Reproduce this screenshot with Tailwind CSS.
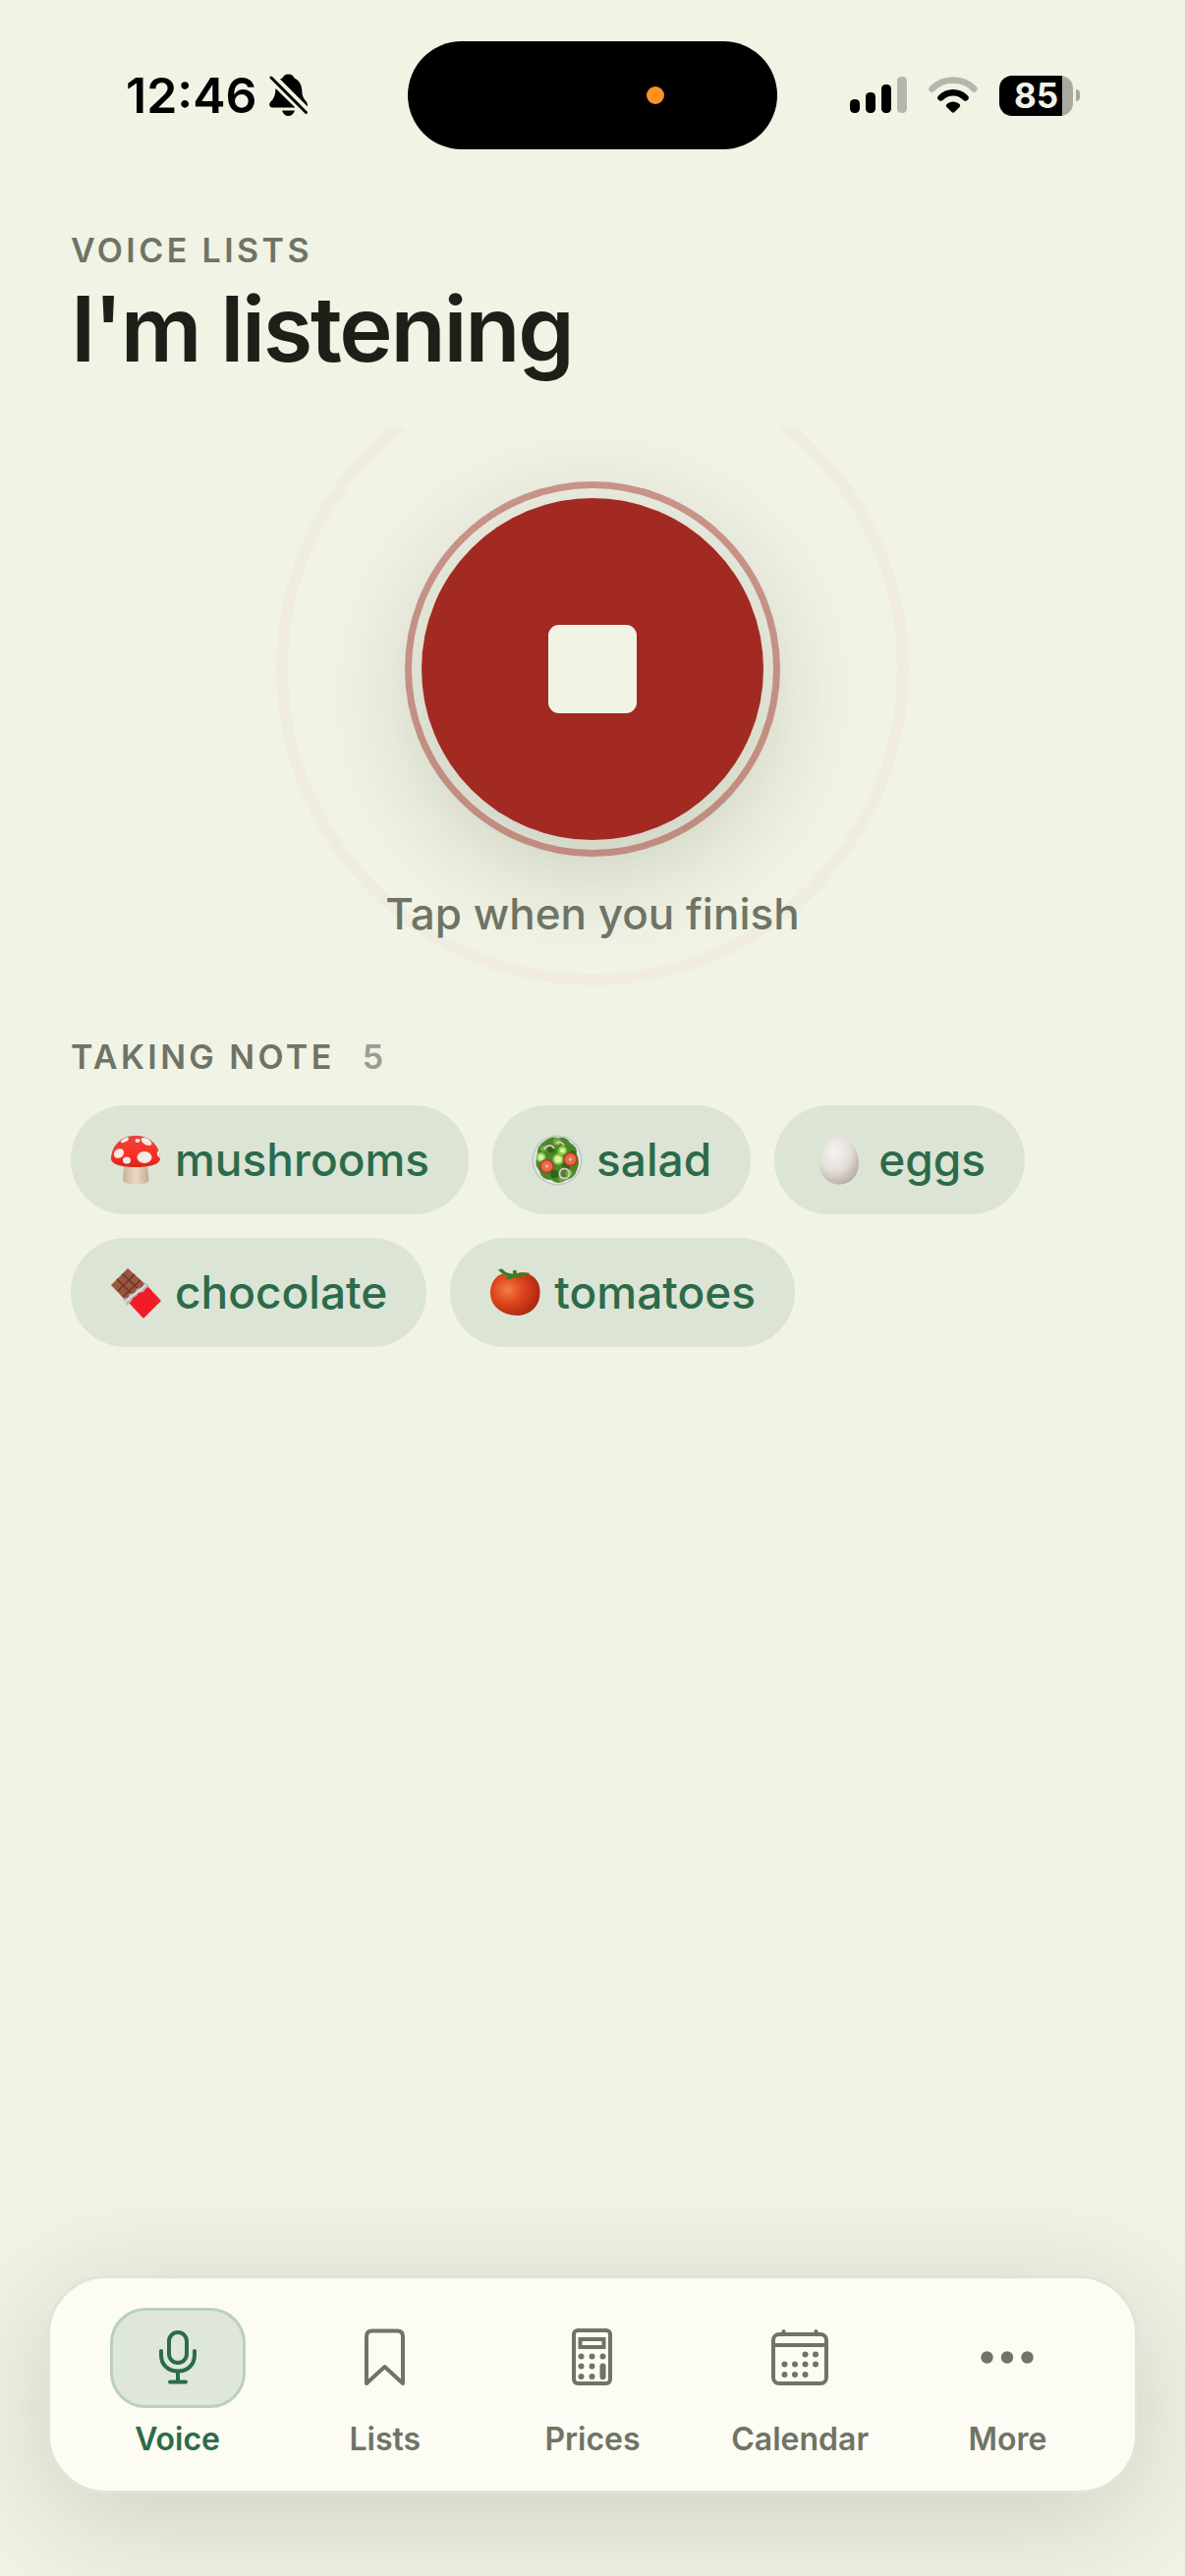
<!DOCTYPE html>
<html lang="en">

<head>
  <meta charset="UTF-8">
  <meta name="viewport" content="width=device-width, initial-scale=1.0">
  <title>Voice Lists</title>
  <script src="https://cdn.jsdelivr.net/npm/@tailwindcss/browser@4"></script>
</head>

<body class="bg-[#f1f3e5] font-['Inter',sans-serif] text-[#6e7466]">

  <div class="min-h-screen flex flex-col">

    <!-- Status Bar -->
    <div class="grid grid-cols-[1fr_376px_1fr] items-center pt-[42px] text-black">
      <div class="flex items-center gap-3 pl-32">
        <span class="text-[50px] leading-[60px] font-semibold">12:46</span>
        <svg class="w-10 h-11" viewBox="0 0 40 44" fill="currentColor">
          <path d="M11 5.5C12.500 5 13.500 4.500 14 3.500C15 1.500 17 0.500 19.500 0.500C22.500 0.500 24.500 2 25.500 4.500C31 7 33 12 33.300 17C33.500 22 34.500 24.500 37 27.500C38.700 29.500 39.200 31 38.800 33.300Z" />
          <path d="M6.500 15L26.500 34.500H3.500C-0.500 34.500 -0.500 30.500 1.500 28.500C5 25 6.200 22 6.500 15Z" />
          <path d="M13 37.500H26C25 41 22.500 43 19.500 43C16.500 43 14 41 13 37.500Z" />
          <path d="M2 4L37.500 39.500" fill="none" stroke="currentColor" stroke-width="3" stroke-linecap="round" />
        </svg>
      </div>
      <div class="h-[110px] rounded-full bg-black flex items-center justify-end pr-[115px]">
        <span class="w-[18px] h-[18px] rounded-full bg-[#ff9124]"></span>
      </div>
      <div class="flex items-center gap-[22px] pl-[74px]">
        <svg class="w-[58px] h-[38px]" viewBox="0 0 58 38" fill="currentColor">
          <rect x="0" y="23" width="10" height="14" rx="4.500" />
          <rect x="16" y="16" width="10" height="21" rx="4.500" />
          <rect x="32" y="8" width="10" height="29" rx="4.500" />
          <rect x="48" y="0" width="10" height="37" rx="4.500" class="text-[#b5b7ac]" fill="currentColor" />
        </svg>
        <svg class="w-[50px] h-[38px]" viewBox="0 0 50 38" fill="none" stroke-width="6.500" stroke-linecap="round">
          <path d="M3.500 12.500C15 0.500 35 0.500 46.500 12.500" stroke="#b5b7ac" />
          <path d="M12.500 21.500C19.500 14.500 30.500 14.500 37.500 21.500" stroke="#000" />
          <path d="M18.500 28C22 24.500 28 24.500 31.500 28C32.500 29 32.300 30 31.500 31L26.500 36C25.500 37 24.500 37 23.500 36L18.500 31C17.700 30 17.500 29 18.500 28Z" fill="#000" />
        </svg>
        <div class="flex items-center gap-[3px]">
          <div class="w-[75px] h-[41px] rounded-[13px] bg-linear-to-r from-black from-85% to-[#a8aa9f] to-85% flex items-center justify-center text-[#f1f3e5] text-[35px] leading-10 font-bold">85</div>
          <span class="w-1 h-3 rounded-r-full bg-[#a8aa9f]"></span>
        </div>
      </div>
    </div>

    <!-- Header -->
    <header class="px-[72px] pt-[78px]">
      <p class="text-[34px] leading-[50px] font-semibold tracking-widest uppercase">Voice Lists</p>
      <h1 class="text-[92px] leading-[110px] font-semibold tracking-tight text-[#1c2018]">I'm listening</h1>
    </header>

    <!-- Recorder -->
    <section class="mt-[45px] h-[590px] overflow-hidden flex flex-col items-center">
      <div class="relative mt-[55px] w-[382px] h-[382px] shrink-0 flex items-center justify-center">
        <span class="absolute -inset-[131px] rounded-full border-12 border-[#f0ede0]"></span>
        <button type="button" aria-label="Stop recording" class="w-[348px] h-[348px] rounded-full bg-[#a22a22] shadow-[0_24px_110px_rgba(28,44,24,0.22)] flex items-center justify-center">
          <span class="w-[90px] h-[90px] rounded-[11px] bg-[#f1f3e5]"></span>
        </button>
        <span class="absolute inset-0 rounded-full border-7 border-[#a22a22]/45 pointer-events-none"></span>
      </div>
      <p class="relative mt-7 text-[44px] leading-[60px] font-medium">Tap when you finish</p>
    </section>

    <!-- Captured items -->
    <section class="px-[72px] pt-[26px]">
      <h2 class="flex gap-7 text-[34px] leading-[50px] font-semibold uppercase"><span class="tracking-widest">Taking note</span><span class="text-[#999d8f]">5</span></h2>
      <ul class="mt-6 flex flex-wrap gap-6 text-[46px] leading-[63px] font-medium text-[#2c6b4a]">
        <li class="flex items-center gap-3.5 rounded-full bg-[#dce4d5] px-10 py-6">
          <svg class="w-[52px] h-[52px]" viewBox="0 0 52 52">
            <defs>
              <linearGradient id="stem" x1="0" x2="1"><stop stop-color="#c9b298" /><stop offset=".5" stop-color="#ead9c4" /><stop offset="1" stop-color="#c4ab90" /></linearGradient>
              <linearGradient id="cap" x1="0" x2="0" y1="0" y2="1"><stop stop-color="#e5443a" /><stop offset=".6" stop-color="#fb3026" /><stop offset="1" stop-color="#d3271f" /></linearGradient>
            </defs>
            <path d="M14 31H38L39.500 46C39.500 49 35 50 26.500 50S13 49 13 46Z" fill="url(#stem)" />
            <path d="M1 24C2 9 13 1 26 1S50 9 51 24C51 31 38 33 26 33S1 31 1 24Z" fill="url(#cap)" />
            <g fill="#f3ebe4">
              <ellipse cx="9" cy="19" rx="5.500" ry="4.500" transform="rotate(-35 9 19)" />
              <ellipse cx="35" cy="23" rx="7.500" ry="6" />
              <ellipse cx="17" cy="26" rx="4" ry="3.500" />
              <ellipse cx="37" cy="7" rx="6" ry="3.200" transform="rotate(30 37 7)" />
              <ellipse cx="15" cy="5.500" rx="4.500" ry="1.800" transform="rotate(-28 15 5.500)" />
              <ellipse cx="28" cy="6" rx="2.500" ry="2" />
              <path d="M50 16C47 17 47 22 51 24Z" />
            </g>
          </svg>
          mushrooms
        </li>
        <li class="flex items-center gap-3.5 rounded-full bg-[#dce4d5] px-10 py-6">
          <svg class="w-[52px] h-[52px]" viewBox="0 0 52 52">
            <circle cx="26" cy="26" r="25.500" fill="#bfc4c6" />
            <circle cx="26" cy="26" r="24" fill="#e4e8e8" />
            <path d="M14 6Q20 1 27 3Q36 2 39 8Q47 12 46 20Q50 28 46 36Q44 44 35 46Q27 52 20 46Q10 46 8 37Q2 30 6 22Q4 12 14 6Z" fill="#48882a" />
            <g fill="#2e651c">
              <circle cx="20" cy="15" r="3.500" /><circle cx="35" cy="32" r="4" /><circle cx="23" cy="40" r="4" /><circle cx="13" cy="27" r="3" /><circle cx="42" cy="19" r="3" />
            </g>
            <g fill="#6eb037">
              <circle cx="26" cy="7" r="4" /><circle cx="12" cy="14" r="3" /><circle cx="38" cy="39" r="3.500" /><circle cx="29" cy="19" r="3" /><circle cx="30" cy="45" r="2.500" />
            </g>
            <g fill="#d9f2a0" stroke="#8acb48" stroke-width="2">
              <circle cx="9.500" cy="23" r="4" /><circle cx="27" cy="25" r="4.500" /><circle cx="31.500" cy="16" r="3.500" />
            </g>
            <g fill="#e8694c" stroke="#b93a26" stroke-width="1.500">
              <circle cx="15.500" cy="32" r="6.500" /><circle cx="39.500" cy="25" r="6.500" />
            </g>
            <g fill="#f2b090">
              <circle cx="15.500" cy="32" r="1.800" /><circle cx="39.500" cy="25" r="1.800" />
            </g>
            <g fill="none" stroke="#e8c3cf" stroke-width="1.800">
              <circle cx="33.500" cy="39.500" r="5" /><path d="M13 15C15 10 21 10 23 14M25 9C28 6 32 8 33 11" />
            </g>
          </svg>
          salad
        </li>
        <li class="flex items-center gap-3.5 rounded-full bg-[#dce4d5] px-10 py-6">
          <svg class="w-[52px] h-[52px]" viewBox="0 0 52 52">
            <defs>
              <radialGradient id="egg" cx=".38" cy=".32" r=".75"><stop stop-color="#f6f3f0" /><stop offset=".55" stop-color="#e3deda" /><stop offset="1" stop-color="#b3a89e" /></radialGradient>
            </defs>
            <path d="M26 1.500C37 1.500 46 17 46 29C46 42 37 50.500 26 50.500S6 42 6 29C6 17 15 1.500 26 1.500Z" fill="url(#egg)" />
          </svg>
          eggs
        </li>
        <li class="flex items-center gap-3.5 rounded-full bg-[#dce4d5] px-10 py-6">
          <svg class="w-[52px] h-[52px]" viewBox="0 0 52 52">
            <path d="M18 1L38 19L17 35L1 18Z" fill="#9a5640" />
            <path d="M12.500 6.500L31 24M7 12L24 29M25 7L8 24M31 13L13 30" stroke="#6f3423" stroke-width="1.500" fill="none" />
            <path d="M35 18L39 20L52 34L34 52L19 36Z" fill="#f01d28" />
            <path d="M35 15L40 19L36 22L34 25L29 26L27 29L23 31L22 34L17 39L16 35L12 32L18 31L20 27L25 26L27 22L33 20Z" fill="#b9b7ba" />
            <path d="M36 18L31 23L25 27L20 31L16 35" fill="none" stroke="#e9e9ec" stroke-width="1.200" />
          </svg>
          chocolate
        </li>
        <li class="flex items-center gap-3.5 rounded-full bg-[#dce4d5] px-10 py-6">
          <svg class="w-[52px] h-[52px]" viewBox="0 0 52 52">
            <defs>
              <radialGradient id="tomato" cx=".35" cy=".4" r=".75"><stop stop-color="#f0803f" /><stop offset=".4" stop-color="#e0471f" /><stop offset="1" stop-color="#a02010" /></radialGradient>
            </defs>
            <path d="M26 7C31 4 39 5 44 9C50 13 52 20 51.500 27C51 41 40 49 28 49C14 49 1 40 1 26C1 14 9 5 19 6Z" fill="url(#tomato)" />
            <path d="M9 2L13 1.500Q17 6 24 7L24 3L27.500 3L28 7Q35 4 42 6Q36 8 30 9L35 11Q29 11 26 9.500Q22 13 16 12L20 9Q12 7 9 2Z" fill="#3a7d24" />
          </svg>
          tomatoes
        </li>
      </ul>
    </section>

    <!-- Tab Bar -->
    <nav class="mt-auto mx-12 mb-[84px] px-6 py-[30px] grid grid-cols-5 rounded-[60px] border-3 border-[#e2e4dc] bg-[#fcfcf4] shadow-[0_24px_120px_rgba(28,44,24,0.18)] text-[32px] leading-[45px] font-semibold">
      <a href="#" class="flex flex-col items-center gap-[9px] text-[#2c6b4a]">
        <span class="w-[138px] h-[102px] rounded-[36px] border-3 border-[#bbcfc0] bg-[#dfe7dc] flex items-center justify-center">
          <svg class="w-[60px] h-[60px]" viewBox="0 0 60 60" fill="none" stroke="currentColor" stroke-width="4" stroke-linecap="round">
            <rect x="21" y="4" width="18" height="31" rx="9" />
            <path d="M13 23V27C13 37 20 43.500 30 43.500S47 37 47 27V23M30 44V54M22 54.500H38" />
          </svg>
        </span>
        Voice
      </a>
      <a href="#" class="flex flex-col items-center gap-[9px]">
        <span class="h-[102px] flex items-center">
          <svg class="w-[60px] h-[60px]" viewBox="0 0 60 60" fill="none" stroke="currentColor" stroke-width="4" stroke-linejoin="round">
            <path d="M11 56V8.500Q11 2.500 16.500 2.500H42.500Q48 2.500 48 8.500V56L29.500 39Z" />
          </svg>
        </span>
        Lists
      </a>
      <a href="#" class="flex flex-col items-center gap-[9px]">
        <span class="h-[102px] flex items-center">
          <svg class="w-[60px] h-[60px]" viewBox="0 1 60 60" fill="currentColor">
            <g fill="none" stroke="currentColor" stroke-width="4">
              <rect x="11" y="3" width="37" height="54" rx="4" />
              <rect x="17.500" y="12" width="24" height="8" />
            </g>
            <circle cx="18.500" cy="29.500" r="3" /><circle cx="29.500" cy="29.500" r="3" /><circle cx="40.500" cy="29.500" r="3" />
            <circle cx="18.500" cy="39.500" r="3" /><circle cx="29.500" cy="39.500" r="3" />
            <circle cx="18.500" cy="50" r="3" /><circle cx="29.500" cy="50" r="3" />
            <rect x="37.500" y="36.500" width="6" height="16.500" rx="2.800" />
          </svg>
        </span>
        Prices
      </a>
      <a href="#" class="flex flex-col items-center gap-[9px]">
        <span class="h-[102px] flex items-center">
          <svg class="w-[60px] h-[60px]" viewBox="0 1 60 60" fill="currentColor">
            <g fill="none" stroke="currentColor" stroke-width="4" stroke-linecap="round">
              <rect x="3" y="7" width="54" height="50" rx="6" />
              <path d="M4 18H57M13.500 4V6M46.500 4V6" />
            </g>
            <circle cx="35.500" cy="27.500" r="3" /><circle cx="46" cy="27.500" r="3" />
            <circle cx="14.500" cy="37.500" r="3" /><circle cx="25" cy="37.500" r="3" /><circle cx="35.500" cy="37.500" r="3" /><circle cx="46" cy="37.500" r="3" />
            <circle cx="14.500" cy="48" r="3" /><circle cx="25" cy="48" r="3" /><circle cx="35.500" cy="48" r="3" />
          </svg>
        </span>
        Calendar
      </a>
      <a href="#" class="flex flex-col items-center gap-[9px]">
        <span class="h-[102px] flex items-center">
          <svg class="w-[60px] h-[60px]" viewBox="0 0 60 60" fill="currentColor">
            <circle cx="9.500" cy="29.500" r="6.200" /><circle cx="30" cy="29.500" r="6.200" /><circle cx="50.500" cy="29.500" r="6.200" />
          </svg>
        </span>
        More
      </a>
    </nav>

  </div>

</body>

</html>
